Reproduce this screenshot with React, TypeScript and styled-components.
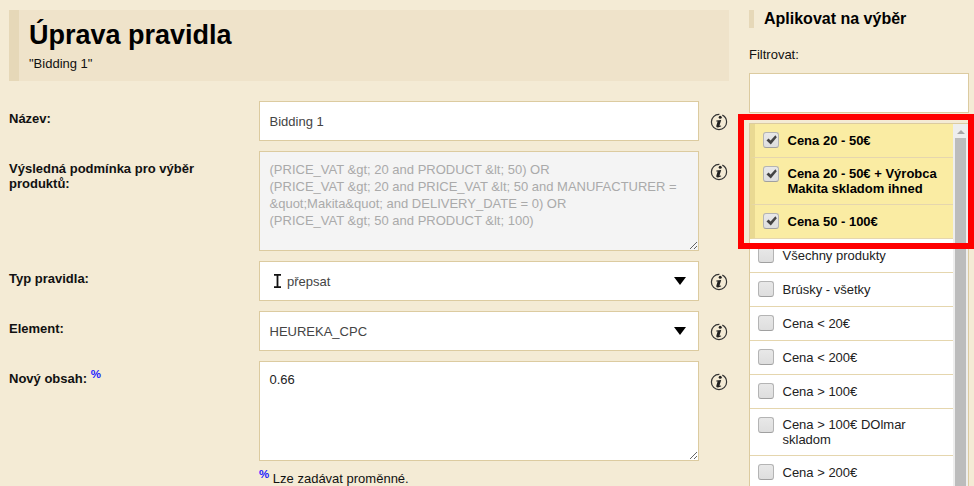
import styled, { createGlobalStyle } from "styled-components";

const selectedItems = ["Cena 20 - 50€", "Cena 20 - 50€ + Výrobca Makita skladom ihned", "Cena 50 - 100€"];
const otherItems = [
    "Všechny produkty",
    "Brúsky - všetky",
    "Cena < 20€",
    "Cena < 200€",
    "Cena > 100€",
    "Cena > 100€ DOlmar skladom",
    "Cena > 200€",
];

function InfoIcon() {
    return (
        <InfoButton viewBox="0 0 18 18" aria-hidden="true">
            <circle cx="9" cy="9" r="7.6" fill="none" stroke="#333" strokeWidth="1.2" strokeDasharray="36 3 8.75" />
            <circle cx="10.2" cy="4.2" r="1.5" fill="#222" />
            <path d="M6.4 7.6 L11.2 7 L9.5 12.4 Q9.3 13.2 11 12.4 L11.2 13.3 Q8.8 14.8 6.9 14.3 Q6 13.9 6.4 12.4 L7.6 8.6 L6.3 8.4 Z" fill="#222" />
        </InfoButton>
    );
}

function IBeam() {
    return (
        <IBeamIcon viewBox="0 0 7 14" aria-hidden="true">
            <path d="M0 0.9 H7 M3.5 0.9 V13.1 M0 13.1 H7" fill="none" stroke="#111" strokeWidth="1.8" />
        </IBeamIcon>
    );
}

function App() {
    return (
        <Page>
            <GlobalStyle />
            <Main>
                <Heading>
                    <h1>Úprava pravidla</h1>
                    <p>"Bidding 1"</p>
                </Heading>

                <Form>
                    <Row>
                        <Label>Název:</Label>
                        <Field>Bidding 1</Field>
                        <InfoIcon />
                    </Row>
                    <Row>
                        <Label>Výsledná podmínka pro výběr<br />produktů:</Label>
                        <Area $disabled readOnly value={'(PRICE_VAT &gt; 20 and PRODUCT &lt; 50) OR\n(PRICE_VAT &gt; 20 and PRICE_VAT &lt; 50 and MANUFACTURER = &quot;Makita&quot; and DELIVERY_DATE = 0) OR\n(PRICE_VAT &gt; 50 and PRODUCT &lt; 100)'} />
                        <InfoIcon />
                    </Row>
                    <Row>
                        <Label>Typ pravidla:</Label>
                        <SelectField>
                            <IBeam />
                            <span>přepsat</span>
                            <SelectArrow />
                        </SelectField>
                        <InfoIcon />
                    </Row>
                    <Row>
                        <Label>Element:</Label>
                        <SelectField>
                            <span>HEUREKA_CPC</span>
                            <SelectArrow />
                        </SelectField>
                        <InfoIcon />
                    </Row>
                    <Row>
                        <Label>Nový obsah: <Percent>%</Percent></Label>
                        <Area readOnly value="0.66" />
                        <InfoIcon />
                    </Row>
                    <Row>
                        <Label />
                        <Note><Percent>%</Percent> Lze zadávat proměnné.</Note>
                    </Row>
                </Form>
            </Main>

            <Side>
                <SideTitle>Aplikovat na výběr</SideTitle>
                <FilterLabel>Filtrovat:</FilterLabel>
                <FilterInput />
                <List>
                    <Items>
                        {selectedItems.map((item) => (
                            <Item key={item} $selected>
                                <Check>
                                    <svg width="11" height="10" viewBox="0 0 11 10" aria-hidden="true">
                                        <path d="M0.5 5.5 L2.5 3.6 L4.6 5.6 L9.4 0.3 L10.8 2.2 L4.8 9.6 Z" fill="#444" />
                                    </svg>
                                </Check>
                                <span>{item}</span>
                            </Item>
                        ))}
                        {otherItems.map((item) => (
                            <Item key={item}>
                                <Check />
                                <span>{item}</span>
                            </Item>
                        ))}
                    </Items>
                    <Scrollbar>
                        <ScrollUp />
                        <ScrollThumb />
                    </Scrollbar>
                </List>
                <RedFrame />
            </Side>
        </Page>
    );
}

const GlobalStyle = createGlobalStyle`
    html, body {
        margin: 0;
        height: 100%;
        overflow: hidden;
        background: #f4ebd5;
    }
    body {
        font-family: "Liberation Sans", Arial, sans-serif;
        font-size: 13px;
        color: #111;
    }
`;

const Page = styled.div`
    display: flex;
    align-items: flex-start;
    gap: 20px;
    height: 486px;
    padding: 10px 0 0 9px;
    box-sizing: border-box;
    overflow: hidden;
    position: relative;
`;

const Main = styled.div`
    width: 720px;
    flex: none;
`;

const Heading = styled.div`
    height: 71px;
    box-sizing: border-box;
    padding: 9px 10px 0 10px;
    background: #efe3ca;
    border-left: 10px solid #e6d8b8;

    h1 {
        margin: 0;
        font-size: 27px;
        line-height: 32px;
        color: #000;
    }

    p {
        margin: 5px 0 0;
        font-size: 13px;
        line-height: 15px;
    }
`;

const Form = styled.div`
    display: flex;
    flex-direction: column;
    gap: 10px;
    margin-top: 20px;
`;

const Row = styled.div`
    display: flex;
    align-items: flex-start;
`;

const Label = styled.label`
    flex: none;
    width: 250px;
    padding-top: 10px;
    font-weight: bold;
    font-size: 13px;
    line-height: 15px;
`;

const Field = styled.div`
    width: 440px;
    height: 40px;
    box-sizing: border-box;
    padding: 0 9.5px;
    display: flex;
    align-items: center;
    gap: 7px;
    background: #fff;
    border: 1px solid #dccba0;
    color: #444;
    font-size: 13px;
`;

const SelectField = styled(Field)`
    position: relative;
`;

const IBeamIcon = styled.svg`
    flex: none;
    width: 7px;
    height: 14px;
    margin-left: 4.5px;
    margin-right: -1px;
`;

const SelectArrow = styled.i`
    position: absolute;
    right: 12px;
    top: 15px;
    width: 0;
    height: 0;
    border-left: 6px solid transparent;
    border-right: 6px solid transparent;
    border-top: 8px solid #000;
`;

const Area = styled.textarea<{ $disabled?: boolean }>`
    display: block;
    width: 440px;
    height: 100px;
    box-sizing: border-box;
    padding: 9px 9.5px;
    margin: 0;
    background: ${({ $disabled }) => ($disabled ? "#f4f4f4" : "#fff")};
    border: 1px solid #dccba0;
    border-radius: 0;
    color: ${({ $disabled }) => ($disabled ? "#aaa" : "#222")};
    font-family: "Liberation Sans", Arial, sans-serif;
    font-size: 13px;
    line-height: 17px;
    outline: none;
`;

const InfoButton = styled.svg`
    flex: none;
    width: 18px;
    height: 18px;
    margin: 12px 0 0 11px;
`;

const Percent = styled.sup`
    color: #22f;
    font-weight: bold;
    font-size: 11.5px;
    line-height: 0;
    vertical-align: 5.5px;
`;

const Note = styled.div`
    font-size: 13px;
    line-height: 16px;
`;

const Side = styled.div`
    width: 220px;
    flex: none;
`;

const SideTitle = styled.h2`
    margin: 0;
    height: 18px;
    padding-left: 10px;
    border-left: 5px solid #e6d8b8;
    font-size: 16px;
    line-height: 18px;
    color: #000;
`;

const FilterLabel = styled.div`
    margin-top: 19px;
    font-size: 13px;
    line-height: 16px;
`;

const FilterInput = styled.div`
    margin-top: 10px;
    height: 40px;
    box-sizing: border-box;
    background: #fff;
    border: 1px solid #dccba0;
`;

const List = styled.div`
    margin-top: 10px;
    height: 400px;
    box-sizing: border-box;
    display: flex;
    background: #fff;
    border: 1px solid #dccba0;
`;

const Items = styled.div`
    flex: 1;
    min-width: 0;
`;

const Item = styled.div<{ $selected?: boolean }>`
    display: flex;
    align-items: center;
    gap: 8.5px;
    padding: 8px;
    border-bottom: 1px solid #e5d6ae;
    font-size: 13px;
    line-height: 15px;
    color: #222;
    ${({ $selected }) =>
        $selected &&
        `
        background: #faeca3;
        border-left: 5px solid #e9d992;
        font-weight: bold;
        color: #000;
    `}
`;

const Check = styled.span`
    flex: none;
    align-self: flex-start;
    width: 16px;
    height: 16px;
    margin-bottom: 1px;
    box-sizing: border-box;
    display: flex;
    align-items: center;
    justify-content: center;
    background: linear-gradient(#e8e8e8, #dedede);
    border: 1px solid #b4b4b4;
    border-bottom-color: #a0a0a0;
    border-radius: 3px;
`;

const Scrollbar = styled.div`
    flex: none;
    width: 15px;
    background: #eeeeee;
    display: flex;
    flex-direction: column;
    align-items: center;
`;

const ScrollUp = styled.i`
    width: 0;
    height: 0;
    margin: 6px 0 4px;
    border-left: 4px solid transparent;
    border-right: 4px solid transparent;
    border-bottom: 4px solid #a6a6a6;
`;

const ScrollThumb = styled.div`
    width: 11px;
    flex: 1;
    background: #bcbcbc;
`;

const RedFrame = styled.div`
    position: absolute;
    left: 738px;
    top: 114px;
    width: 236px;
    height: 135px;
    box-sizing: border-box;
    border: 6px solid #ff0000;
    pointer-events: none;
`;

export default App;
